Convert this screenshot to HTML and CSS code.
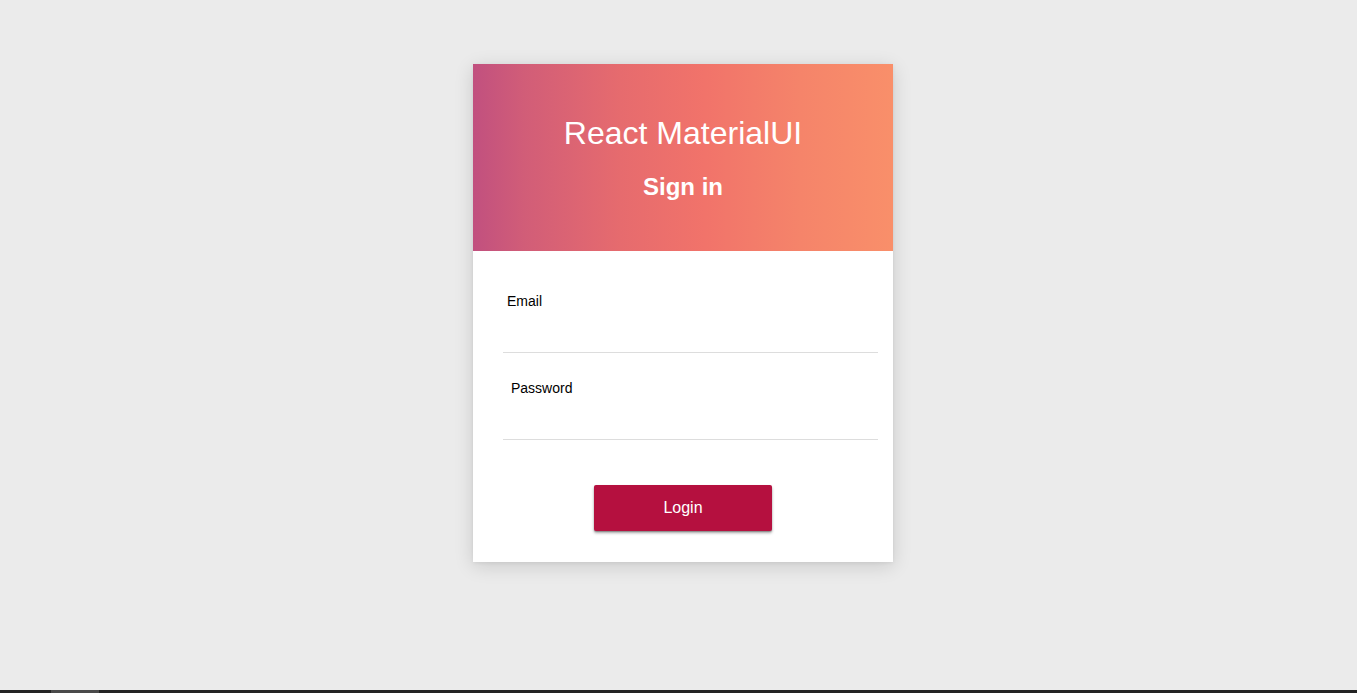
FILE: index.html
```html
<!DOCTYPE html>
<html lang="en">
<head>
<meta charset="utf-8">
<title>React MaterialUI - Sign in</title>
<link rel="stylesheet" href="styles.css">
</head>
<body>
<div class="page">
  <main class="stage">
    <div class="card">
      <header class="card-header">
        <h1 class="brand">React MaterialUI</h1>
        <h2 class="subtitle">Sign in</h2>
      </header>
      <form class="card-body">
        <label class="field">
          <span class="field-label">Email</span>
          <input class="field-input" type="email">
        </label>
        <label class="field field-password">
          <span class="field-label">Password</span>
          <input class="field-input" type="password">
        </label>
        <div class="actions">
          <button class="login-btn" type="button">Login</button>
        </div>
      </form>
    </div>
  </main>
  <div class="bottom-bar"><span class="bottom-thumb"></span></div>
</div>
</body>
</html>
```

FILE: styles.css
```css
* { box-sizing: border-box; }
html, body { margin: 0; padding: 0; height: 100%; }
body {
  background: #ebebeb;
  font-family: "Liberation Sans", Arial, sans-serif;
  overflow: hidden;
}
.page {
  height: 100vh;
  display: flex;
  flex-direction: column;
}
.stage {
  flex: 1;
  display: flex;
  justify-content: center;
  align-items: flex-start;
  padding-top: 64px;
  padding-left: 9px;
}
.card {
  width: 420px;
  background: #fff;
  box-shadow: 0 4px 18px rgba(0,0,0,0.14), 0 1px 4px rgba(0,0,0,0.06);
}
.card-header {
  height: 187px;
  background: linear-gradient(to right, #c1507f 0%, #d15d78 12%, #e66b6e 35%, #f1736a 55%, #f5846a 78%, #f98f6a 100%);
  color: #fff;
  display: flex;
  flex-direction: column;
  align-items: center;
  padding-top: 51px;
}
.brand {
  margin: 0;
  font-weight: 400;
  font-size: 32px;
  line-height: 37px;
}
.subtitle {
  margin: 21px 0 0;
  font-weight: 700;
  font-size: 24px;
  line-height: 28px;
}
.card-body {
  margin: 0;
  padding: 42px 15px 31px 30px;
  display: flex;
  flex-direction: column;
}
.field {
  display: flex;
  flex-direction: column;
  border-bottom: 1px solid #dddddd;
  height: 60px;
}
.field-password {
  margin-top: 27px;
}
.field-label {
  font-size: 14px;
  line-height: 16px;
  color: #000;
  padding-left: 4px;
}
.field-password .field-label {
  padding-left: 8px;
}
.field-input {
  flex: 1;
  border: none;
  outline: none;
  background: transparent;
  font: inherit;
  padding: 0 4px;
}
.actions {
  display: flex;
  justify-content: center;
  margin: 45px -15px 0 -30px;
}
.login-btn {
  width: 178px;
  height: 46px;
  border: none;
  border-radius: 2px;
  background: #b5103f;
  color: #fff;
  font-family: "Liberation Sans", Arial, sans-serif;
  font-size: 16px;
  box-shadow: 0 2px 3px rgba(0,0,0,0.35), 0 1px 1px rgba(0,0,0,0.2);
  cursor: pointer;
}
.bottom-bar {
  height: 3px;
  background: #232323;
  display: flex;
  padding-left: 51px;
}
.bottom-thumb {
  width: 48px;
  background: #4a4a4a;
}
```
